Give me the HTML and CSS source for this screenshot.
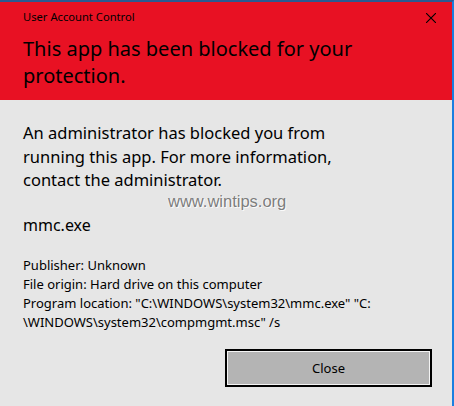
FILE: index.html
```html
<!DOCTYPE html>
<html lang="en">

<head>
  <meta charset="UTF-8">
  <meta name="viewport" content="width=device-width, initial-scale=1.0">
  <title>User Account Control</title>
  <link rel="stylesheet" href="styles.css">
</head>

<body>
  <div class="dialog">
    <div class="header">
      <div class="title-row">
        <span class="title">User Account Control</span>
        <a class="close-x" href="javascript:;">
          <svg width="10" height="10" viewBox="0 0 10 10">
            <path d="M0 0 L10 10 M10 0 L0 10" stroke="#000" stroke-width="1.1" fill="none" />
          </svg>
        </a>
      </div>
      <h1 class="headline">This app has been blocked for your protection.</h1>
    </div>

    <div class="content">
      <p class="message">An administrator has blocked you from running this app. For more information, contact the administrator.</p>
      <div class="watermark">www.wintips.org</div>
      <p class="app-name">mmc.exe</p>

      <ul class="details">
        <li>Publisher: Unknown</li>
        <li>File origin: Hard drive on this computer</li>
        <li>Program location: "C:\WINDOWS\system32\mmc.exe" "C:<wbr>\WINDOWS\system32\compmgmt.msc" /s</li>
      </ul>

      <div class="actions">
        <button class="btn-close">Close</button>
      </div>
    </div>
  </div>
</body>

</html>
```

FILE: styles.css
```css
html,
body {
  width: 100%;
  height: 100%;
  margin: 0;
  padding: 0;
}

body {
  background: #e6e6e6;
  font-family: "Noto Sans", "Open Sans", sans-serif;
  color: #000;
}

ul {
  list-style: none;
  margin: 0;
  padding: 0;
}

.dialog {
  height: 100%;
  box-sizing: border-box;
  border-top: 2px solid #2a5a92;
  border-right: 2px solid #1a7fe0;
  display: flex;
  flex-direction: column;
}

.header {
  background: #e81123;
  padding: 6px 16px 0 23px;
  height: 98px;
  box-sizing: border-box;
}

.title-row {
  display: flex;
  justify-content: space-between;
  align-items: center;
  height: 18px;
}

.title {
  font-size: 11.2px;
  line-height: 18px;
}

.close-x {
  display: block;
  width: 10px;
  height: 10px;
  margin-top: 2px;
}

.close-x svg {
  display: block;
}

.headline {
  margin: 9px 0 0;
  width: 330px;
  font-size: 20px;
  font-weight: normal;
  line-height: 27px;
}

.content {
  padding: 21px 20px 0 23px;
  position: relative;
}

.message {
  margin: 0;
  width: 345px;
  font-size: 16.5px;
  line-height: 23.5px;
}

.watermark {
  position: absolute;
  left: 168px;
  top: 92px;
  font-family: "Liberation Sans", Arial, sans-serif;
  font-size: 16.5px;
  color: #7d7d7d;
  text-shadow: 1px 1px 0 #fafafa, -1px 0 0 #f2f2f2;
}

.app-name {
  margin: 23px 0 0;
  font-size: 16px;
  line-height: 20px;
}

.details {
  margin-top: 21px;
  font-size: 13px;
  line-height: 19px;
}

.actions {
  display: flex;
  justify-content: flex-end;
  margin-top: 17px;
}

.btn-close {
  width: 207px;
  height: 38px;
  background: #b4b4b4;
  border: 2px solid #000;
  box-shadow: inset 0 0 0 1px #f4f4f4;
  font-family: "Noto Sans", "Open Sans", sans-serif;
  font-size: 13px;
  color: #000;
  padding: 0;
}
```
